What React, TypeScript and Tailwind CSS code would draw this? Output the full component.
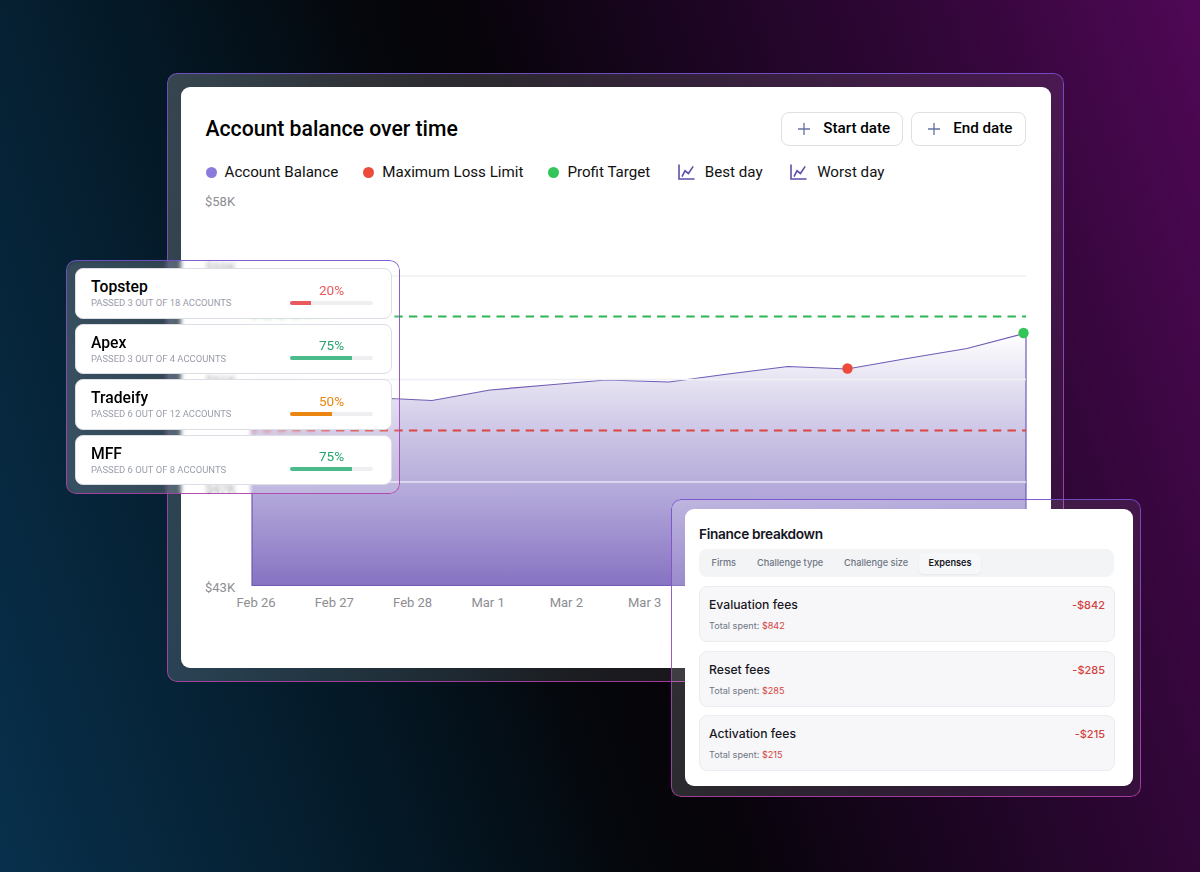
import React from "react";

const legend = [
  { label: "Account Balance", dot: "bg-[#8b7cdb]" },
  { label: "Maximum Loss Limit", dot: "bg-[#ec4a3b]" },
  { label: "Profit Target", dot: "bg-[#33c558]" },
];

const firms = [
  { name: "Topstep", passed: 3, total: 18, percent: 20, bar: 25, text: "text-[#ea5a5c]", fill: "bg-[#ea5a5c]" },
  { name: "Apex", passed: 3, total: 4, percent: 75, bar: 75, text: "text-[#24a36c]", fill: "bg-[#4cbb8b]" },
  { name: "Tradeify", passed: 6, total: 12, percent: 50, bar: 50, text: "text-[#ea860f]", fill: "bg-[#ea860f]" },
  { name: "MFF", passed: 6, total: 8, percent: 75, bar: 75, text: "text-[#24a36c]", fill: "bg-[#4cbb8b]" },
];

const fees = [
  { name: "Evaluation fees", amount: "$842" },
  { name: "Reset fees", amount: "$285" },
  { name: "Activation fees", amount: "$215" },
];

const days = ["Feb 26", "Feb 27", "Feb 28", "Mar 1", "Mar 2", "Mar 3"];

const GradientBorder = () => (
  <div className="pointer-events-none absolute inset-0 rounded-[10px] bg-linear-to-b from-[#7350cf] to-[#b03fa8] p-px opacity-90 [mask:linear-gradient(#fff_0_0)_content-box_exclude,linear-gradient(#fff_0_0)]" />
);

const PlusIcon = () => (
  <svg className="size-3" viewBox="0 0 12 12" fill="none" stroke="#66709f" strokeWidth="1.3">
    <path d="M6 0V12M0 6H12" />
  </svg>
);

const DayIcon = () => (
  <svg className="h-4 w-[17px]" viewBox="0 0 17 16" fill="none" stroke="#5d4fae" strokeWidth="1.6">
    <path d="M1 .5V15H16.5" />
    <path d="M4 12.6L7 6.800L10.400 9.500L15.200 2.400" />
  </svg>
);

const DateButton = ({ label }: { label: string }) => (
  <button className="flex h-[33.5px] items-center gap-[13px] rounded-[8px] border border-[#dedfe3] pr-3 pl-4 text-[15.2px] font-medium text-black">
    <PlusIcon />
    {label}
  </button>
);

const BalanceChart = () => (
  <svg className="absolute top-0 -left-[0.5px] h-[400px] w-[821px]" viewBox="205 200 821 400" overflow="visible">
    <defs>
      <linearGradient id="area" gradientUnits="userSpaceOnUse" x1="0" y1="333" x2="0" y2="586">
        <stop offset="0" stopColor="#fff" />
        <stop offset=".38" stopColor="#cec7e6" />
        <stop offset=".66" stopColor="#b0a5d8" />
        <stop offset="1" stopColor="#8672c2" />
      </linearGradient>
    </defs>
    <path
      d="M252 585.500V408L311 402L391 398.500L432 400.500L490 390L548 385L606 380L669 382L728 374L788 366.500L847 369L907 358.500L967 348.500L1026 333V585.500Z"
      fill="url(#area)"
      stroke="#705bb5"
      strokeWidth="1.2"
    />
    <path d="M252 276H1026" stroke="#f1f1f3" strokeWidth="1.5" />
    <path d="M252 379.500H1026" stroke="#f0eff5" strokeWidth="1.3" />
    <path d="M252 482H1026" stroke="#e9e6f5" strokeWidth="1.6" />
    <path d="M252 316.500H1026" stroke="#2db653" strokeWidth="2" strokeDasharray="8.4 6.2" strokeDashoffset="3.7" />
    <path d="M252 430.500H1026" stroke="#dc4541" strokeWidth="2" strokeDasharray="8.4 6.2" strokeDashoffset="3.7" />
    <circle cx="847.500" cy="368.500" r="5.200" fill="#ec4a3b" />
    <circle cx="1023.500" cy="333" r="5.200" fill="#33c558" />
  </svg>
);

const BalancePanel = () => (
  <section className="relative h-[609px] w-[897px] rounded-[10px] bg-linear-120 from-white/20 via-white/12 via-40% to-white/3 px-[13.5px] pt-3.5">
    <GradientBorder />
    <div className="flex h-[581px] w-[870px] flex-col rounded-[9px] bg-white px-[25px] pt-[25px]">
      <header className="flex items-center justify-between">
        <h1 className="pt-px text-[21.2px] font-medium text-black">Account balance over time</h1>
        <div className="flex gap-2">
          <DateButton label="Start date" />
          <DateButton label="End date" />
        </div>
      </header>
      <div className="mt-[15px] flex h-6 items-center gap-[25px] text-[15.15px] text-[#111]">
        {legend.map((item) => (
          <div key={item.label} className="flex items-center gap-2">
            <span className={`size-[11px] rounded-full ${item.dot}`} />
            {item.label}
          </div>
        ))}
        {["Best day", "Worst day"].map((label) => (
          <div key={label} className="flex items-center gap-2.5 pl-[2.5px]">
            <DayIcon />
            {label}
          </div>
        ))}
      </div>
      <div className="relative mt-[15px] h-[400px] text-[13px] leading-4 text-[#8d8d92]">
        <BalanceChart />
        <span className="absolute -top-[6px] -left-[0.5px]">$58K</span>
        <span className="absolute top-[60px]">$55K</span>
        <span className="absolute top-[173px]">$51K</span>
        <span className="absolute top-[281px]">$47K</span>
        <span className="absolute top-[380px] -left-[0.5px]">$43K</span>
        <div className="absolute top-[395px] left-[31px] flex">
          {days.map((day) => (
            <span key={day} className="w-[78.3px]">
              {day}
            </span>
          ))}
        </div>
      </div>
    </div>
  </section>
);

const FirmsPanel = () => (
  <section className="absolute top-[260px] left-[66px] h-[234px] w-[334px] rounded-[10px] bg-linear-to-r from-white/20 to-white/15 px-[9px] pt-2">
    <div className="absolute inset-0 rounded-[10px] backdrop-blur-[2px] [mask-image:linear-gradient(to_right,#000_60%,transparent_85%)]" />
    <GradientBorder />
    <div className="relative flex flex-col gap-[5px]">
      {firms.map((firm) => (
        <div
          key={firm.name}
          className="flex h-[50.5px] w-[317px] items-center justify-between rounded-[8px] border border-[#dcdee6] bg-white pr-[18px] pl-[15px]"
        >
          <div className="pt-[2px]">
            <h2 className="text-[15.7px] leading-[18px] font-medium text-black">{firm.name}</h2>
            <p className="text-[9.45px] leading-[14px] text-[#9a9dab] uppercase">
              Passed {firm.passed} out of {firm.total} accounts
            </p>
          </div>
          <div className="w-[83px]">
            <p className={`text-center text-[13.5px] leading-4 ${firm.text}`}>{firm.percent}%</p>
            <div className="mt-[3px] h-1 overflow-hidden rounded-full bg-[#efeff1]">
              <div className={`h-full ${firm.fill}`} style={{ width: `${firm.bar}%` }} />
            </div>
          </div>
        </div>
      ))}
    </div>
  </section>
);

const FinancePanel = () => (
  <section className="absolute top-[499px] left-[671px] h-[298px] w-[470px] rounded-[10px] bg-linear-110 from-white/18 to-white/4 px-3.5 pt-2.5 font-['Inter',sans-serif]">
    <GradientBorder />
    <div className="relative h-[277px] w-[447.5px] rounded-[9px] bg-white px-3.5 pt-[15px]">
      <h2 className="text-[13.7px] leading-5 font-semibold tracking-[-0.025em] text-[#151523]">Finance breakdown</h2>
      <nav className="mt-[5px] flex h-7 w-[415px] items-center rounded-[8px] bg-[#f3f4f6] px-[12.5px] text-[9.2px] font-medium text-[#6e7484]">
        <span className="w-[45.5px]">Firms</span>
        <span className="w-[87px]">Challenge type</span>
        <span className="w-[75px]">Challenge size</span>
        <span className="flex h-[21px] w-[62px] items-center justify-center rounded-[5px] bg-[#f6f7f8] font-semibold text-[#17171f] shadow-[0_1px_2px_rgba(0,0,0,0.05)]">
          Expenses
        </span>
      </nav>
      <ul className="mt-[9px] flex flex-col gap-[8.5px]">
        {fees.map((fee) => (
          <li key={fee.name} className="h-[56px] w-[416px] rounded-[8px] border border-[#ececf0] bg-[#f7f7f9] px-[9px] pt-[9px]">
            <div className="flex items-center justify-between leading-[18px] font-medium">
              <span className="text-[12.2px] text-[#17171f]">{fee.name}</span>
              <span className="text-[11px] text-[#d3423f]">-{fee.amount}</span>
            </div>
            <p className="mt-[5px] text-[9.15px] leading-[14px] text-[#6e7484]">
              Total spent: <span className="text-[#d3423f]">{fee.amount}</span>
            </p>
          </li>
        ))}
      </ul>
    </div>
  </section>
);

const App = () => {
  return (
    <main className="relative h-[872px] w-[1200px] overflow-hidden bg-[linear-gradient(72deg,#08304c_0%,#062337_16%,#04141f_32%,#05080d_42%,#060409_49%,#1a0520_64%,#320639_82%,#500856_100%)] pt-[73px] pl-[167px] font-['Roboto',sans-serif]">
      <BalancePanel />
      <FirmsPanel />
      <FinancePanel />
    </main>
  );
};

export default App;
